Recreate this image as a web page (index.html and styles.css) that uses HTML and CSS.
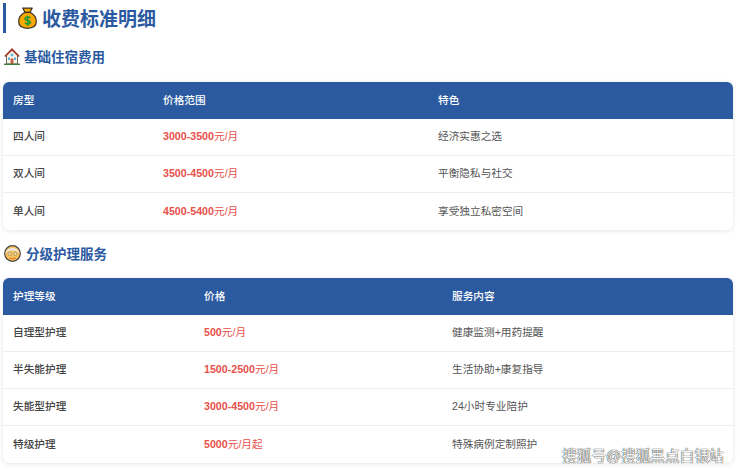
FILE: index.html
```html
<!DOCTYPE html>
<html lang="zh">
<head>
<meta charset="utf-8">
<title>收费标准明细</title>
<link rel="stylesheet" href="styles.css">
</head>
<body>
<main class="page">
  <h1 class="title">
    <svg class="icon-bag" viewBox="0 0 20 23" aria-hidden="true">
      <path d="M5 1h10l-2.300 4.500C16.500 7.500 19.300 11 19.300 15c0 5-4 7.300-9.300 7.300S.7 20 .7 15c0-4 2.800-7.500 6.600-9.500z" fill="#f7a900" stroke="#3b3226" stroke-width="1.300" stroke-linejoin="round"/>
      <path d="M6.500 5.600h7" stroke="#3b3226" stroke-width="1.500"/>
      <path d="M13 11.500c-.8-1.400-5.500-1.600-5.500.6 0 2.700 5.500 1.300 5.500 4 0 2.200-4.800 2-5.800.5M10.200 9v11" fill="none" stroke="#1f9a38" stroke-width="1.700"/>
    </svg>
    <span class="label">收费标准明细</span>
  </h1>

  <h2 class="subtitle">
    <svg class="icon-sub" viewBox="0 0 16 17" aria-hidden="true">
      <path d="M2.500 7.500v8.500h11V7.500L8 2.200z" fill="#fbf3e6" stroke="#4a3f38" stroke-width=".8"/>
      <path d="M.8 8.500L8 1.300l7.200 7.200" fill="none" stroke="#a8392f" stroke-width="1.700"/>
      <path d="M6.600 10.500h2.800V16H6.600z" fill="#c75a3f"/>
      <path d="M4 9.500h2v2.500H4zM10 9.500h2v2.500h-2z" fill="#58b6de"/>
      <path d="M6.800 5.800h2.400v2.400H6.800z" fill="#58b6de"/>
      <path d="M0 15.600h16V17H0z" fill="#3c7d45"/>
    </svg>
    <span class="label">基础住宿费用</span>
  </h2>
  <table class="fee-table">
    <colgroup><col class="a1"><col class="a2"><col></colgroup>
    <thead><tr><th>房型</th><th>价格范围</th><th>特色</th></tr></thead>
    <tbody>
      <tr><td class="name">四人间</td><td class="price">3000-3500<span class="unit">元/月</span></td><td class="note">经济实惠之选</td></tr>
      <tr><td class="name">双人间</td><td class="price">3500-4500<span class="unit">元/月</span></td><td class="note">平衡隐私与社交</td></tr>
      <tr><td class="name">单人间</td><td class="price">4500-5400<span class="unit">元/月</span></td><td class="note">享受独立私密空间</td></tr>
    </tbody>
  </table>

  <h2 class="subtitle second">
    <svg class="icon-sub face" viewBox="0 0 17 17" aria-hidden="true">
      <circle cx="8.500" cy="8.500" r="7.800" fill="#f9c25a" stroke="#4a4642" stroke-width="1.200"/>
      <path d="M1.600 9C1.400 1 15.600 1 15.400 9c-1.300-3-3.600-3.600-6.900-3.600S2.900 6 1.600 9z" fill="#e9e6df"/>
      <circle cx="5.700" cy="8.800" r="1.700" fill="#fbdc94" stroke="#8f8778" stroke-width=".7"/>
      <circle cx="11.300" cy="8.800" r="1.700" fill="#fbdc94" stroke="#8f8778" stroke-width=".7"/>
      <path d="M5.500 12.700c1.800 1.300 4.200 1.300 6 0" fill="none" stroke="#e0762c" stroke-width="1.100"/>
    </svg>
    <span class="label">分级护理服务</span>
  </h2>
  <table class="fee-table">
    <colgroup><col class="b1"><col class="b2"><col></colgroup>
    <thead><tr><th>护理等级</th><th>价格</th><th>服务内容</th></tr></thead>
    <tbody>
      <tr><td class="name">自理型护理</td><td class="price">500<span class="unit">元/月</span></td><td class="note">健康监测+用药提醒</td></tr>
      <tr><td class="name">半失能护理</td><td class="price">1500-2500<span class="unit">元/月</span></td><td class="note">生活协助+康复指导</td></tr>
      <tr><td class="name">失能型护理</td><td class="price">3000-4500<span class="unit">元/月</span></td><td class="note">24小时专业陪护</td></tr>
      <tr><td class="name">特级护理</td><td class="price">5000<span class="unit">元/月起</span></td><td class="note">特殊病例定制照护</td></tr>
    </tbody>
  </table>
</main>
<div class="watermark">搜狐号@搜狐黑点白银站</div>
</body>
</html>
```
FILE: styles.css
```css
* { box-sizing: border-box; }
html, body { margin: 0; padding: 0; background: #fff; }
body {
  width: 740px;
  height: 472px;
  overflow: hidden;
  position: relative;
  font-family: "Liberation Sans", "Noto Sans CJK SC", sans-serif;
  color: #333;
}
.page { padding: 3px 7px 0 3px; }
.title {
  display: flex;
  align-items: center;
  gap: 6px;
  height: 30px;
  margin: 0;
  padding-left: 12px;
  border-left: 3px solid #2b5aa0;
  font-size: 19px;
  font-weight: 700;
  color: #2b5aa0;
}
.title .label { padding-bottom: 2px; margin-left: -1px; }
.icon-bag { width: 19px; height: 22px; flex: none; margin-bottom: 1px; }
.subtitle {
  display: flex;
  align-items: center;
  gap: 4px;
  height: 20px;
  margin: 13px 0 16px 1px;
  font-size: 13.500px;
  font-weight: 700;
  color: #2b5aa0;
}
.subtitle .label { padding-bottom: 1px; }
.subtitle.second { margin: 13px 0 15px 1px; gap: 5px; }
.icon-sub { width: 16px; height: 17px; flex: none; }
.icon-sub.face { width: 17px; }
.fee-table {
  width: 730px;
  table-layout: fixed;
  border-collapse: separate;
  border-spacing: 0;
  border-radius: 6px;
  overflow: hidden;
  background: #fff;
  box-shadow: 0 1px 5px rgba(0, 0, 0, .1);
  font-size: 10.670px;
}
.a1 { width: 150px; }
.a2 { width: 275px; }
.b1 { width: 191px; }
.b2 { width: 248px; }
.fee-table th {
  height: 37px;
  padding: 0 10px 3px;
  background: #2b5aa0;
  color: #fff;
  font-weight: 500;
  text-align: left;
}
.fee-table td {
  height: 37px;
  padding: 0 10px 3px;
  border-bottom: 1px solid #ececec;
}
.fee-table tr:last-child td { border-bottom: 0; }
.name { font-weight: 500; color: #444; }
.price { font-weight: 700; color: #e8504a; }
.unit { font-weight: 400; }
.note { color: #555; }
.watermark {
  position: absolute;
  left: 562px;
  top: 447px;
  font-size: 14.700px;
  line-height: 18px;
  white-space: nowrap;
  color: #f4f4f4;
  text-shadow: 0 0 1px #333, 0 0 1px #333;
}
```
